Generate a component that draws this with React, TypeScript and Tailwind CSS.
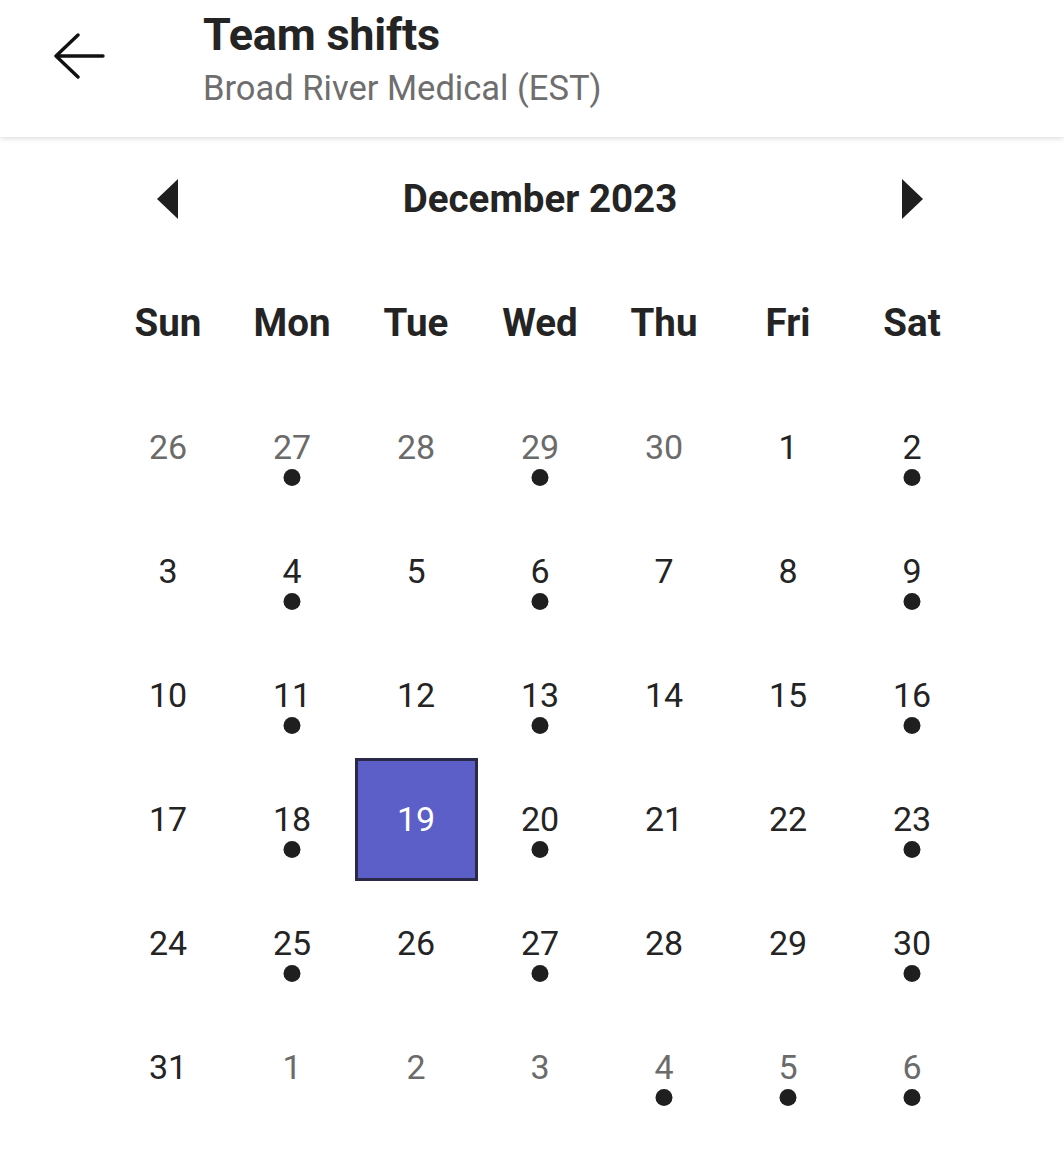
import React from "react";

type Day = { n: number; cur: boolean; dot: boolean };

const rows: Day[][] = [
  [
    { n: 26, cur: false, dot: false },
    { n: 27, cur: false, dot: true },
    { n: 28, cur: false, dot: false },
    { n: 29, cur: false, dot: true },
    { n: 30, cur: false, dot: false },
    { n: 1, cur: true, dot: false },
    { n: 2, cur: true, dot: true },
  ],
  [
    { n: 3, cur: true, dot: false },
    { n: 4, cur: true, dot: true },
    { n: 5, cur: true, dot: false },
    { n: 6, cur: true, dot: true },
    { n: 7, cur: true, dot: false },
    { n: 8, cur: true, dot: false },
    { n: 9, cur: true, dot: true },
  ],
  [
    { n: 10, cur: true, dot: false },
    { n: 11, cur: true, dot: true },
    { n: 12, cur: true, dot: false },
    { n: 13, cur: true, dot: true },
    { n: 14, cur: true, dot: false },
    { n: 15, cur: true, dot: false },
    { n: 16, cur: true, dot: true },
  ],
  [
    { n: 17, cur: true, dot: false },
    { n: 18, cur: true, dot: true },
    { n: 19, cur: true, dot: false },
    { n: 20, cur: true, dot: true },
    { n: 21, cur: true, dot: false },
    { n: 22, cur: true, dot: false },
    { n: 23, cur: true, dot: true },
  ],
  [
    { n: 24, cur: true, dot: false },
    { n: 25, cur: true, dot: true },
    { n: 26, cur: true, dot: false },
    { n: 27, cur: true, dot: true },
    { n: 28, cur: true, dot: false },
    { n: 29, cur: true, dot: false },
    { n: 30, cur: true, dot: true },
  ],
  [
    { n: 31, cur: true, dot: false },
    { n: 1, cur: false, dot: false },
    { n: 2, cur: false, dot: false },
    { n: 3, cur: false, dot: false },
    { n: 4, cur: false, dot: true },
    { n: 5, cur: false, dot: true },
    { n: 6, cur: false, dot: true },
  ],
];

const days = ["Sun", "Mon", "Tue", "Wed", "Thu", "Fri", "Sat"];

export default function App() {
  return (
    <div
      className="w-[1064px] h-[1171px] bg-white overflow-hidden relative"
      style={{ fontFamily: "Roboto, 'Noto Sans', sans-serif" }}
    >
      <header className="relative z-10 h-[137px] bg-white shadow-[0_2px_5px_rgba(0,0,0,0.12)] flex">
        <div className="w-[203px] flex items-start pt-[33px] pl-[53px]">
          <svg width="52" height="46" viewBox="0 0 52 46" fill="none">
            <path
              d="M50 23H4M25 2L3 23L25 44"
              stroke="#111"
              strokeWidth="3.4"
              strokeLinecap="round"
              strokeLinejoin="round"
            />
          </svg>
        </div>
        <div className="flex flex-col pt-[9px]">
          <div className="text-[45px] leading-[52px] font-bold text-[#242424] tracking-[-0.2px]">
            Team shifts
          </div>
          <div className="text-[34.5px] leading-[40px] text-[#6e6e6e] mt-[7px]">
            Broad River Medical (EST)
          </div>
        </div>
      </header>

      <div className="ml-[106px] w-[868px]">
        <div className="h-[124px] grid grid-cols-7 items-center">
          <div className="flex justify-center">
            <svg width="22" height="40" viewBox="0 0 22 40">
              <path d="M21 0L0 20L21 40Z" fill="#1f1f1f" />
            </svg>
          </div>
          <div className="col-span-5 text-center text-[38.5px] font-bold text-[#242424]">
            December 2023
          </div>
          <div className="flex justify-center">
            <svg width="22" height="40" viewBox="0 0 22 40">
              <path d="M1 0L22 20L1 40Z" fill="#1f1f1f" />
            </svg>
          </div>
        </div>

        <div className="h-[124px] grid grid-cols-7 items-center">
          {days.map((d) => (
            <div key={d} className="text-center text-[38.5px] font-bold text-[#242424]">
              {d}
            </div>
          ))}
        </div>

        {rows.map((row, ri) => (
          <div key={ri} className="h-[124px] grid grid-cols-7">
            {row.map((d, ci) => {
              const selected = ri === 3 && ci === 2;
              return (
                <div key={ci} className="relative flex items-center justify-center">
                  {selected ? (
                    <div className="w-[123px] h-[123px] bg-[#5b5fc7] border-[3px] border-[#2a2a48] flex items-center justify-center text-[34px] text-white">
                      {d.n}
                    </div>
                  ) : (
                    <span
                      className={
                        "text-[34px] leading-none " +
                        (d.cur ? "text-[#242424]" : "text-[#6b6b6b]")
                      }
                    >
                      {d.n}
                    </span>
                  )}
                  {d.dot && (
                    <div className="absolute left-1/2 top-[calc(50%+22px)] -translate-x-1/2 w-[17px] h-[17px] rounded-full bg-[#1f1f1f]" />
                  )}
                </div>
              );
            })}
          </div>
        ))}
      </div>
    </div>
  );
}
